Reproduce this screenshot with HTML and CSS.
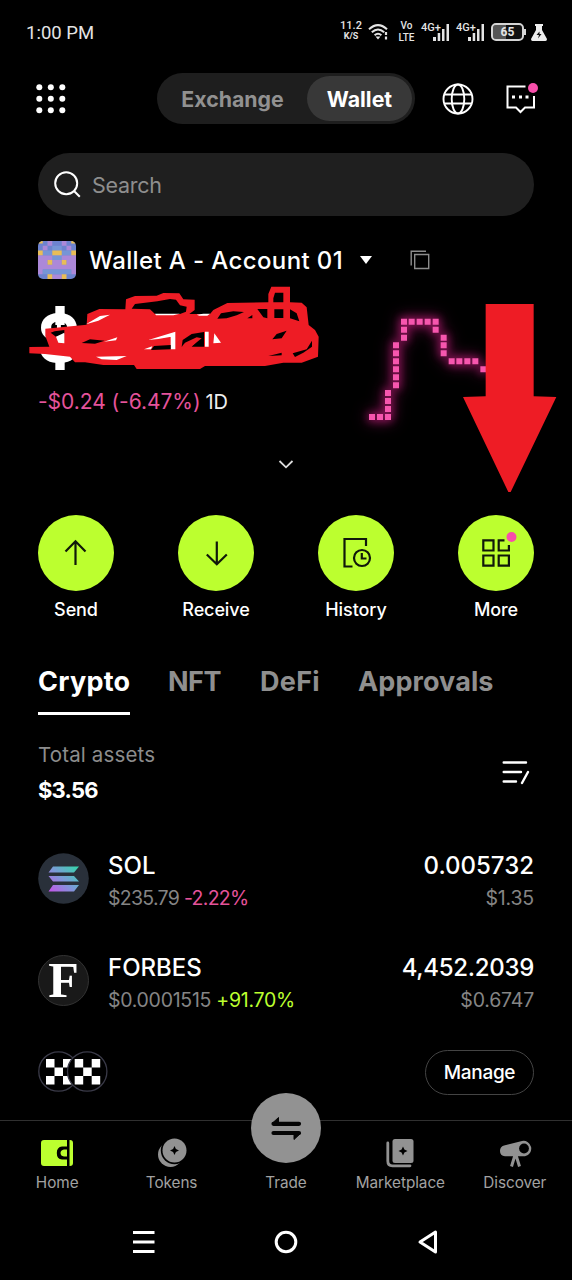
FILE: index.html
```
<!DOCTYPE html>
<html lang="en">
<head>
<meta charset="utf-8">
<title>Wallet</title>
<link rel="stylesheet" href="styles.css">
</head>
<body>
<div class="screen">
  <div class="status">
    <span class="clock">1:00 PM</span>
    <div class="status-icons">
      <div class="stack speed"><b>11.2</b><span>K/S</span></div>
      <svg class="wifi" width="22" height="18" viewBox="0 0 22 18" fill="none" stroke="#e4e4e4" stroke-width="2"><path d="M1 6.2Q10 -2 19 6.2M3.8 9.3Q10 3.600 16.200 9.300M6.600 12.300Q10 9.300 13.400 12.300"/><path d="M7.500 13.500h5L10 16.500z" fill="#e4e4e4" stroke="none"/><path d="M18 9v3M18 13.500v3" stroke-width="2.200"/></svg>
      <div class="stack volte"><b>Vo</b><span>LTE</span></div>
      <div class="signal"><span>4G+</span><svg width="18" height="18" viewBox="0 0 18 18"><path d="M1 14h3v4h-3zM5.700 10h2.500v8H5.700zM10 6h2.500v12H10zM14.500 1h2.500v17h-2.500z" fill="#e4e4e4"/></svg></div>
      <div class="signal"><span>4G+</span><svg width="18" height="18" viewBox="0 0 18 18"><path d="M1 14h3v4h-3zM5.700 10h2.500v8H5.700zM10 6h2.500v12H10zM14.500 1h2.500v17h-2.500z" fill="#e4e4e4"/></svg></div>
      <div class="battery">65</div>
      <svg class="flask" width="16" height="17" viewBox="0 0 16 17"><path d="M4 0h8v2h-1v4l5 9q0 2-1.500 2h-13Q0 17 0 15l5-9V2H4z" fill="#eee"/><path d="M8.500 7.500 5.500 11H8l-1 3.500 3.500-4.500H8.500z" fill="#111"/></svg>
    </div>
  </div>

  <header class="header">
    <svg class="grid-icon" width="30" height="30" viewBox="0 0 30 30" fill="#fff"><circle cx="3.300" cy="3.300" r="3"/><circle cx="14.800" cy="3.300" r="3"/><circle cx="26.300" cy="3.300" r="3"/><circle cx="3.300" cy="14.800" r="3"/><circle cx="14.800" cy="14.800" r="3"/><circle cx="26.300" cy="14.800" r="3"/><circle cx="3.300" cy="26.300" r="3"/><circle cx="14.800" cy="26.300" r="3"/><circle cx="26.300" cy="26.300" r="3"/></svg>
    <div class="switch"><span class="switch-item">Exchange</span><span class="switch-item on">Wallet</span></div>
    <svg class="globe" width="32" height="32" viewBox="0 0 32 32" fill="none" stroke="#fff" stroke-width="1.900"><circle cx="16" cy="16" r="14.500"/><ellipse cx="16" cy="16" rx="6.300" ry="14.500"/><path d="M2.300 11.500h27.400M2.300 20.500h27.400"/></svg>
    <svg class="chat" width="33" height="32" viewBox="0 0 33 32" fill="none" stroke="#fff" stroke-width="2"><path d="M20.500 3.500H2.500V24.500H11L15.500 29 20 24.500H29V13"/><path d="M7 14h3M14 14h3M20.500 14h3" stroke-width="3"/><circle cx="28" cy="5" r="5" fill="#f74faa" stroke="none"/></svg>
  </header>

  <div class="search">
    <svg width="27" height="27" viewBox="0 0 27 27" fill="none" stroke="#fff" stroke-width="2"><circle cx="12.200" cy="12.200" r="11"/><path d="M20 20l5.800 5.800"/></svg>
    <span>Search</span>
  </div>

  <section class="hero">
    <div class="account">
      <svg class="avatar" width="38" height="38" viewBox="0 0 8 8"><path fill="#6d83cf" d="M0 0h8v8H0z"/><path fill="#ac88d8" d="M2 0h1v1H2zM5 0h1v1H5zM1 1h1v1H1zM6 1h1v1H6zM0 3h2v2H0zM6 3h2v2H6zM2 3h4v1H2zM3 4h2v1H3zM0 5h8v1H0zM0 6h1v1H0zM7 6h1v1H7zM3 7h2v1H3z"/><path fill="#7695d6" d="M3 1h2v1H3zM1 2h2v1H1zM5 2h2v1H5zM3 3h2v1H3zM1 6h6v1H1z"/><path fill="#e9bd57" d="M0 0h1v.5H0zM7 0h1v.5H7zM0 2h1v1H0zM7 2h1v1H7zM3 2h2v1H3zM2 4h1v1H2zM5 4h1v1H5zM2 7h1v1H2zM5 7h1v1H5z"/></svg>
      <span class="account-name">Wallet A - Account 01</span>
      <svg class="caret" width="12" height="8" viewBox="0 0 12 8"><path d="M0 0h12L6 8z" fill="#fff"/></svg>
      <svg class="copy" width="20" height="20" viewBox="0 0 20 20" fill="none" stroke="#8c8c8c" stroke-width="1.400"><path d="M1.200 15.500V1.200H16"/><path d="M4.700 4.500h14v14h-14z"/></svg>
    </div>
    <div class="balance">$</div>
    <div class="change"><span class="loss">-$0.24 (-6.47%)</span><span class="range">1D</span></div>
    <svg class="chart" viewBox="0 0 696 810"><path fill="#f656ae" d="M87 537h18v18h-18zM111 537h18v18h-18zM135 537h18v18h-18zM135 513h18v18h-18zM135 489h18v18h-18zM135 465h18v18h-18zM159 442h18v18h-18zM159 418h18v18h-18zM159 394h18v18h-18zM159 370h18v18h-18zM159 346h18v18h-18zM159 322h18v18h-18zM183 299h18v18h-18zM183 275h18v18h-18zM183 251h18v18h-18zM206 251h18v18h-18zM230 251h18v18h-18zM254 251h18v18h-18zM278 251h18v18h-18zM278 275h18v18h-18zM302 299h18v18h-18zM302 322h18v18h-18zM302 346h18v18h-18zM326 370h18v18h-18zM349 370h18v18h-18zM373 370h18v18h-18zM397 370h18v18h-18zM421 394h18v18h-18z"/></svg>
    <svg class="scribble" viewBox="0 0 930 570">
      <path fill="#fff" d="M106 228H134V285H106ZM106 380H134V420H106Z"/>
      <path fill="#ee1c25" fill-rule="evenodd" d="M28 351L88 350 76 318V296L200 284 202 252 238 237 316 238 318 208 345 198 410 197 430 189 478 190 490 208 524 209V240L508 252H570L580 240 622 219 745 217V192L754 170H810V217L845 218 860 232 866 285 885 300 896 320 894 380 845 398H790L735 408H555L540 417H350L342 405H250L195 397H165L150 380 75 372 28 370ZM335 236L345 222 412 214 450 207 468 209 480 226 500 230 498 245 480 252H405L390 238ZM765 188H790V217H760V205ZM763 238H790V264H763ZM603 250L640 244 672 246 650 256 620 265 592 266ZM682 265L697 255V265ZM712 237H742V265L730 262ZM810 238L830 250 838 274 810 265ZM818 370L860 358 876 332V350L850 368 825 381ZM757 328L770 312 800 302 785 325ZM745 378L785 368V376Z"/>
      <path fill="#000" d="M92 308L104 304 133 300V312L108 320ZM185 339L210 328 254 332 225 341ZM485 350L488 330 515 312 552 306 552 350H515L535 330Z"/>
      <path fill="#ee1c25" d="M495 338L530 322 545 325 520 345 505 350H485Z"/>
      <path fill="#fff" d="M108 320L133 308V340L115 338ZM198 283L240 258 270 254 235 272ZM405 251H480L460 256H408ZM530 254L550 251H570L562 257H538ZM252 335L292 322 288 331ZM228 380L320 378 290 390 245 388ZM385 330L466 305V318L415 327ZM452 318H466V358H452ZM372 358L397 349 393 358ZM555 305H566V350H555ZM583 310L603 338 580 340Z"/>
      <path fill="#000" d="M393 360L402 348 452 345V358Z"/>
    </svg>
    <svg class="arrow" viewBox="0 0 696 810"><path fill="#ee1c25" d="M437 207H581V484L649 486 512 771H505L369 486 437 484Z"/></svg>
    <svg class="expand" width="16" height="9" viewBox="0 0 16 9" fill="none" stroke="#ddd" stroke-width="1.800"><path d="M1.500 1 8 7.300 14.500 1"/></svg>
  </section>

  <div class="actions">
    <div class="action"><div class="disc"><svg width="76" height="76" viewBox="0 0 76 76" fill="none" stroke="#10180a" stroke-width="2.200"><path d="M37.500 50V26M27.500 36.500 37.500 26.300 47.500 36.500"/></svg></div><span>Send</span></div>
    <div class="action"><div class="disc"><svg width="76" height="76" viewBox="0 0 76 76" fill="none" stroke="#10180a" stroke-width="2.200"><path d="M38.800 26.500V49.500M28.800 39.500 38.800 49.200 48.800 39.500"/></svg></div><span class="receive">Receive</span></div>
    <div class="action"><div class="disc"><svg width="76" height="76" viewBox="0 0 76 76" fill="none" stroke="#10180a" stroke-width="2.200"><path d="M48 31V24H26.500V51.500H34.500"/><circle cx="44" cy="43" r="8"/><path d="M43.800 38V43.500H48.500"/></svg></div><span>History</span></div>
    <div class="action"><div class="disc"><svg width="76" height="76" viewBox="0 0 76 76" fill="none" stroke="#10180a" stroke-width="2.200"><path d="M25.300 25.300H35.500V35.500H25.300ZM25.300 40.500H35.500V50.700H25.300ZM40.700 40.500H50.900V50.700H40.700ZM46.500 25.300H40.700V35.500H50.900V30"/><circle cx="53.500" cy="22" r="5" fill="#f74faa" stroke="none"/></svg></div><span>More</span></div>
  </div>

  <nav class="tabs"><span class="tab active">Crypto</span><span class="tab nft">NFT</span><span class="tab defi">DeFi</span><span class="tab approvals">Approvals</span></nav>

  <div class="total">
    <div><div class="total-label">Total assets</div><div class="total-value">$3.56</div></div>
    <svg width="28" height="25" viewBox="0 0 28 25" fill="none" stroke="#fff" stroke-width="2.400" stroke-linecap="round"><path d="M1.700 2.500H24M1.700 12H19M1.700 21.500H14M26 12 20 23"/></svg>
  </div>

  <div class="asset">
    <svg class="coin" width="51" height="51" viewBox="0 0 51 51"><defs><linearGradient id="sol" gradientUnits="userSpaceOnUse" x1="12" y1="40" x2="38" y2="12"><stop stop-color="#c653ea"/><stop offset=".5" stop-color="#7c9ad8"/><stop offset="1" stop-color="#35d6ab"/></linearGradient></defs><circle cx="25.500" cy="25.500" r="25.300" fill="#29303a"/><path fill="url(#sol)" d="M15 13.500H41L36 19.500H10.500ZM10.500 23H36L41 28.500H15ZM15 32H41L36 38.500H10.500Z"/></svg>
    <div class="asset-main"><div class="asset-name">SOL</div><div class="asset-sub">$235.79 <span class="loss">-2.22%</span></div></div>
    <div class="asset-end"><div class="asset-name">0.005732</div><div class="asset-sub value">$1.35</div></div>
  </div>
  <div class="asset">
    <div class="coin forbes">F</div>
    <div class="asset-main"><div class="asset-name">FORBES</div><div class="asset-sub forbes-price">$0.0001515 <span class="gain">+91.70%</span></div></div>
    <div class="asset-end"><div class="asset-name amount">4,452.2039</div><div class="asset-sub value">$0.6747</div></div>
  </div>

  <div class="manage-row">
    <svg width="70" height="42" viewBox="0 0 70 42"><defs><g id="okx"><circle cx="20.500" cy="20.500" r="19.700" fill="#000" stroke="#3a3a48" stroke-width="1.300"/><path fill="#fff" d="M8 8h8.500v8.500H8zM25 8h8.500v8.500H25zM16.500 16.500H25V25h-8.500zM8 25h8.500v8.500H8zM25 25h8.500v8.500H25z"/></g></defs><use href="#okx"/><use href="#okx" x="28.700"/></svg>
    <span class="manage">Manage</span>
  </div>

  <nav class="bottom">
    <div class="item"><svg width="34" height="30" viewBox="0 0 34 30"><path fill="#bcff2f" d="M4 2H27V8.500H22Q16.800 9 16.800 15T22 21.500H27V28H4Q1 28 1 25V5Q1 2 4 2ZM29.500 2H30Q33 2 33 5V25Q33 28 30 28H29.500ZM24 11.500H27V18.500H24Q20.500 18 20.500 15T24 11.500Z"/></svg><span>Home</span></div>
    <div class="item"><svg width="34" height="30" viewBox="0 0 34 30"><circle cx="15.500" cy="16.500" r="12.500" fill="#929292"/><circle cx="19.500" cy="12.500" r="13.700" fill="#000"/><circle cx="19.500" cy="12.500" r="12" fill="#929292"/><path d="M19.500 8l1.400 3.100 3.100 1.400-3.100 1.400-1.400 3.100-1.400-3.100-3.100-1.400 3.100-1.400z" fill="#000"/></svg><span>Tokens</span></div>
    <div class="item"><div class="trade"><svg width="34" height="30" viewBox="0 0 34 30"><path d="M4.500 10.800H30M4.500 20H30" stroke="#050505" stroke-width="4.200" stroke-linecap="round"/><path d="M3 10.500 9.500 4.500V11ZM31.500 20.500 25 26.500V20Z" fill="#050505" stroke="#050505" stroke-linejoin="round"/></svg></div><span>Trade</span></div>
    <div class="item"><svg width="34" height="30" viewBox="0 0 34 30"><path d="M4.800 5V23Q4.800 27.800 9.500 27.800H27" fill="none" stroke="#929292" stroke-width="2.800" stroke-linecap="round"/><rect x="9.500" y="1" width="21" height="24" rx="2.500" fill="#929292"/><path d="M20 8.500l1.400 3.100 3.100 1.400-3.100 1.400-1.400 3.100-1.400-3.100-3.100-1.400 3.100-1.400z" fill="#000"/></svg><span>Marketplace</span></div>
    <div class="item"><svg width="34" height="30" viewBox="0 0 34 30"><path d="M6 7.500 24 3a7.700 7.700 0 0 1 3 15.200H7Q2 18 2 13 2 8.500 6 7.500Z" fill="#929292"/><circle cx="26" cy="10.500" r="4.900" fill="#000"/><path d="M17 17 13.500 28.500M18 17 21.500 28.500" stroke="#929292" stroke-width="3"/></svg><span>Discover</span></div>
  </nav>

  <div class="system">
    <svg width="22" height="24" viewBox="0 0 22 24"><path d="M0 1h21.500v3H0zM0 10.500h21.500v3H0zM0 20h21.500v3H0z" fill="#fff"/></svg>
    <svg width="24" height="24" viewBox="0 0 24 24"><circle cx="12" cy="12" r="9.800" fill="none" stroke="#fff" stroke-width="3"/></svg>
    <svg width="22" height="26" viewBox="0 0 22 26"><path d="M3 13 18.500 3V23Z" fill="none" stroke="#fff" stroke-width="3" stroke-linejoin="round"/></svg>
  </div>
</div>
</body>
</html>
```
FILE: styles.css
```
* { box-sizing: border-box; }
body { margin: 0; background: #000; color: #fff; font-family: Inter, "Liberation Sans", sans-serif; }
svg { display: block; flex: none; }
.screen { width: 572px; height: 1280px; display: flex; flex-direction: column; overflow: hidden; background: #000; white-space: nowrap; }
.screen > * { flex: none; }

.status { height: 64px; padding: 0 25px 0 26px; display: flex; align-items: center; justify-content: space-between; font-family: Roboto, sans-serif; color: #e4e4e4; }
.clock { font-size: 18.5px; padding-top: 1px; }
.status-icons { display: flex; align-items: center; }
.stack { display: flex; flex-direction: column; align-items: center; font-size: 10.5px; line-height: 12px; font-weight: 500; }
.stack b { font-weight: 500; }
.speed { width: 22px; margin-right: 6px; margin-top: -3px; }
.speed b { font-size: 11px; }
.speed span { font-size: 9px; font-weight: 700; line-height: 9px; }
.wifi { margin-right: 8px; }
.volte { width: 17px; margin-right: 6px; font-size: 10px; }
.signal { width: 29px; height: 18px; margin-right: 6px; position: relative; font-size: 11px; line-height: 10px; font-weight: 500; }
.signal svg { position: absolute; right: 0; top: 0; }
.battery { width: 33px; height: 18px; border: 2px solid #d5d5d5; border-radius: 5px; margin-right: 7px; background: linear-gradient(90deg, #555 45%, #111 45%); background-clip: padding-box; display: flex; align-items: center; justify-content: center; font-size: 12px; font-weight: 700; position: relative; }
.battery::after { content: ""; position: absolute; right: -4px; top: 4px; width: 2px; height: 6px; background: #d5d5d5; }

.header { height: 70px; padding: 0 34px 1px 36px; display: flex; align-items: center; }
.switch { display: flex; height: 51px; width: 258px; margin-left: 91px; border-radius: 26px; background: #1e1e1e; padding: 3px; }
.switch-item { width: 147px; padding-right: 2px; display: flex; align-items: center; justify-content: center; border-radius: 23px; font-size: 21.3px; font-weight: 700; color: #919191; }
.switch-item.on { width: 105px; padding: 0; background: #383838; color: #fff; }
.globe { margin-left: 27px; }
.chat { margin-left: auto; }

.search { height: 63px; margin: 19px 38px 0; padding-left: 16px; border-radius: 32px; background: #1f1f1f; display: flex; align-items: center; gap: 11px; font-size: 21.5px; letter-spacing: -0.3px; color: #8e8e8e; }

.hero { height: 299px; margin: 0 38px; padding-top: 24px; position: relative; }
.account { display: flex; align-items: center; height: 40px; }
.avatar { border-radius: 5px; }
.account-name { width: 254px; margin-left: 13px; font-size: 24px; font-weight: 500; letter-spacing: 0.38px; }
.caret { margin-left: 17px; }
.copy { margin-left: 38px; }
.balance { margin-top: 18px; height: 80px; line-height: 80px; font-size: 66px; font-weight: 700; text-indent: -1px; }
.change { margin-top: 10px; height: 28px; line-height: 28px; display: flex; gap: 5px; font-size: 21px; letter-spacing: -0.05px; }
.loss { color: #e5539b; }
.gain { color: #bcff2f; }
.range { font-size: 20px; color: #eee; }
.chart, .arrow { position: absolute; left: 302px; top: 19px; width: 232px; height: 270px; }
.chart { filter: drop-shadow(0 0 4px #c41f7c) drop-shadow(0 0 7px #8a1058); }
.scribble { position: absolute; left: -18px; top: 14px; width: 310px; height: 190px; }
.expand { margin: 44px auto 0; }

.actions { display: flex; justify-content: space-between; margin: 0 38px; height: 133px; }
.action { width: 76px; display: flex; flex-direction: column; align-items: center; font-size: 18px; font-weight: 500; line-height: 37px; letter-spacing: -0.1px; }
.disc { width: 76px; height: 76px; border-radius: 50%; background: #bcff2f; }

.tabs { display: flex; margin: 0 38px; height: 67px; font-size: 27px; font-weight: 700; color: #8f8f8f; line-height: 67px; }
.tab.active { width: 92px; color: #fff; border-bottom: 3px solid #fff; letter-spacing: 0.25px; }
.nft { margin-left: 38px; width: 53px; letter-spacing: -0.5px; }
.defi { margin-left: 39px; width: 61px; letter-spacing: 0.3px; }
.approvals { margin-left: 37px; letter-spacing: 0.1px; }

.total { display: flex; justify-content: space-between; align-items: center; margin: 24px 42px 0 38px; height: 68px; }
.total-label { font-size: 20.5px; line-height: 34px; letter-spacing: 0.15px; color: #8d8d8d; }
.total-value { font-size: 22px; line-height: 36px; font-weight: 700; letter-spacing: -0.8px; }
.total svg { margin-bottom: 2px; }

.asset { display: flex; align-items: center; margin: 20px 38px 0; height: 102px; }
.asset + .asset { margin-top: 0; }
.coin { width: 51px; height: 51px; flex: none; }
.forbes { border-radius: 50%; border: 1.5px solid #333; background: #191919; display: flex; align-items: center; justify-content: center; font: 700 50px/48px "Liberation Serif", serif; }
.asset-main { margin-left: 19px; padding-top: 6px; }
.asset-end { margin-left: auto; padding-top: 6px; text-align: right; }
.asset-name { font-size: 24px; line-height: 33px; font-weight: 500; }
.amount { letter-spacing: -0.3px; }
.asset-sub { font-size: 19.5px; line-height: 32px; letter-spacing: -0.7px; color: #858585; }
.asset-sub.forbes-price { letter-spacing: -0.28px; }
.asset-sub.value { letter-spacing: -0.2px; }

.manage-row { height: 46px; margin: 18px 38px 0; display: flex; align-items: center; justify-content: space-between; }
.manage { width: 109px; height: 45px; border: 1px solid #444; border-radius: 23px; display: flex; align-items: center; justify-content: center; font-size: 19px; font-weight: 500; letter-spacing: -0.3px; }

.bottom { display: grid; grid-template-columns: repeat(5, 1fr); height: 84px; margin-top: 25px; border-top: 1px solid #303030; padding-top: 17px; }
.item { display: flex; flex-direction: column; align-items: center; color: #a2a2a2; font-size: 15.3px; line-height: 30px; letter-spacing: -0.05px; }
.trade { width: 70px; height: 70px; margin-top: -45px; margin-bottom: 5px; border-radius: 50%; background: #929292; display: flex; align-items: center; justify-content: center; }

.system { height: 76px; display: flex; justify-content: center; align-items: center; gap: 119px; }
```
